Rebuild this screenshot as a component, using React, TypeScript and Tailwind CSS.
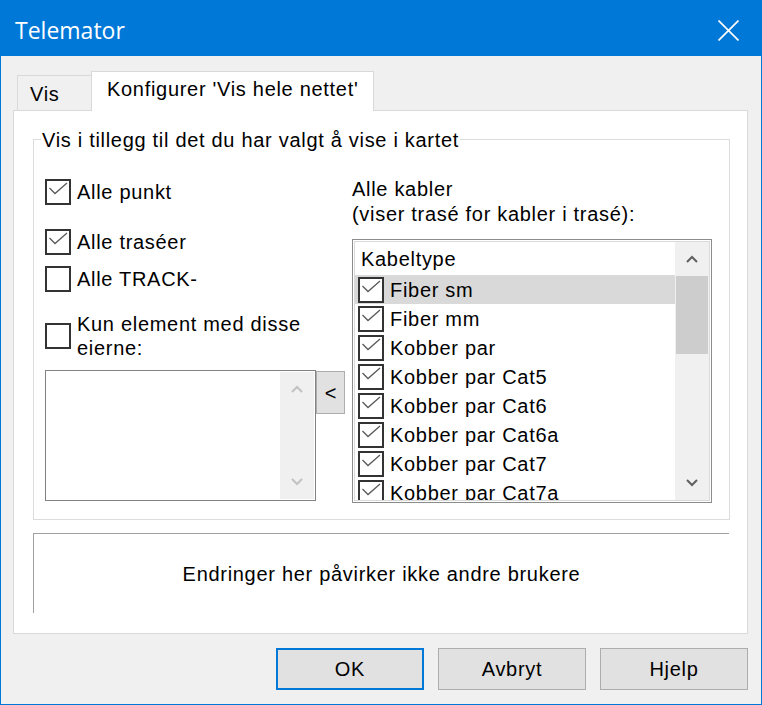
import React from "react";

function Box({ checked }: { checked: boolean }) {
  return (
    <div className="w-[26px] h-[26px] border-2 border-[#333333] bg-white shrink-0">
      {checked && (
        <svg viewBox="0 0 22 22" className="w-[22px] h-[22px] block">
          <polyline
            points="2.5,7 8,12.5 20,2"
            fill="none"
            stroke="#5a5a5a"
            strokeWidth="1.3"
          />
        </svg>
      )}
    </div>
  );
}

function Chevron({ up, color }: { up: boolean; color: string }) {
  return (
    <svg viewBox="0 0 12 8" className="w-[12px] h-[8px] block">
      <polyline
        points={up ? "1,7 6,2 11,7" : "1,1 6,6 11,1"}
        fill="none"
        stroke={color}
        strokeWidth="2"
      />
    </svg>
  );
}

const cables = [
  "Fiber sm",
  "Fiber mm",
  "Kobber par",
  "Kobber par Cat5",
  "Kobber par Cat6",
  "Kobber par Cat6a",
  "Kobber par Cat7",
  "Kobber par Cat7a",
];

export default function App() {
  return (
    <div className="w-[762px] h-[705px] bg-[#f0f0f0] flex flex-col border-x border-b border-[#0078d7] font-['Liberation_Sans',Arial,sans-serif] text-[20px] tracking-[0.7px] text-black overflow-hidden">
      {/* Title bar */}
      <div className="h-[56px] shrink-0 bg-[#0078d7] flex items-center justify-between pl-[14px] pr-[22px]">
        <span className="font-['Open_Sans',sans-serif] text-[23px] tracking-normal text-white leading-none pt-[4px]">
          Telemator
        </span>
        <svg viewBox="0 0 20 20" className="w-[21px] h-[21px] block mt-[4px]">
          <line x1="0.5" y1="0.5" x2="19.5" y2="19.5" stroke="white" strokeWidth="1.6" />
          <line x1="19.5" y1="0.5" x2="0.5" y2="19.5" stroke="white" strokeWidth="1.6" />
        </svg>
      </div>

      {/* Tabs */}
      <div className="mt-[15px] ml-[16px] h-[39px] flex items-end">
        <div className="w-[74px] h-[35px] border-l border-t border-[#d9d9d9] bg-[#f0f0f0] pl-[12px] pt-[6px] leading-[24px]">
          Vis
        </div>
        <div className="w-[283px] h-[40px] -mb-px relative z-10 border-l border-t border-r border-[#d9d9d9] bg-white pl-[15px] pt-[5px] leading-[24px]">
          Konfigurer 'Vis hele nettet'
        </div>
      </div>

      {/* Panel */}
      <div className="ml-[12px] w-[735px] h-[524px] border border-[#d9d9d9] bg-white flex flex-col">
        {/* Group box */}
        <div className="ml-[19px] mt-[28px] w-[697px] h-[381px] border border-[#dcdcdc] relative flex">
          <span className="absolute -top-[12px] left-[7px] bg-white px-[1px] leading-[24px]">
            Vis i tillegg til det du har valgt å vise i kartet
          </span>

          {/* Left column */}
          <div className="ml-[11px] mt-[39px] w-[307px] flex flex-col">
            <div className="h-[26px] flex items-center gap-[6px]">
              <Box checked />
              <span className="leading-[24px]">Alle punkt</span>
            </div>
            <div className="mt-[24px] h-[26px] flex items-center gap-[6px]">
              <Box checked />
              <span className="leading-[24px]">Alle traséer</span>
            </div>
            <div className="mt-[11px] h-[26px] flex items-center gap-[6px]">
              <Box checked={false} />
              <span className="leading-[24px]">Alle TRACK-</span>
            </div>
            <div className="mt-[20px] h-[48px] flex items-center gap-[6px]">
              <Box checked={false} />
              <span className="leading-[24px]">
                Kun element med disse
                <br />
                eierne:
              </span>
            </div>
            <div className="mt-[10px] flex items-start">
              <div className="w-[271px] h-[131px] border border-[#828282] p-[1px] bg-white flex justify-end">
                <div className="w-[34px] h-full bg-[#f0f0f0] flex flex-col justify-between">
                  <div className="h-[34px] flex items-center justify-center">
                    <Chevron up color="#c2c2c2" />
                  </div>
                  <div className="h-[34px] flex items-center justify-center">
                    <Chevron up={false} color="#c2c2c2" />
                  </div>
                </div>
              </div>
              <div className="mt-[1px] w-[29px] h-[43px] border border-[#adadad] bg-[#e1e1e1] flex items-center justify-center leading-none tracking-normal">
                &lt;
              </div>
            </div>
          </div>

          {/* Right column */}
          <div className="mt-[37px] w-[360px] flex flex-col">
            <div className="leading-[25px]">
              Alle kabler
              <br />
              (viser trasé for kabler i trasé):
            </div>
            <div className="mt-[12px] w-[360px] h-[264px] border border-[#8c8c8c] p-[1px] bg-white">
              <div className="h-full border border-[#dadada] flex overflow-hidden">
                <div className="flex-1 flex flex-col overflow-hidden">
                  <div className="h-[33px] shrink-0 flex items-center pl-[6px] leading-[24px]">
                    Kabeltype
                  </div>
                  {cables.map((c, i) => (
                    <div
                      key={c}
                      className={
                        "h-[29px] shrink-0 flex items-center pl-[3px] gap-[6px] " +
                        (i === 0 ? "bg-[#d9d9d9]" : "bg-white")
                      }
                    >
                      <Box checked />
                      <span className="leading-[24px] whitespace-nowrap">{c}</span>
                    </div>
                  ))}
                </div>
                <div className="w-[34px] shrink-0 bg-[#f0f0f0] flex flex-col">
                  <div className="h-[34px] shrink-0 flex items-center justify-center">
                    <Chevron up color="#606060" />
                  </div>
                  <div className="h-[78px] shrink-0 mx-[1px] bg-[#cdcdcd]" />
                  <div className="flex-1" />
                  <div className="h-[34px] shrink-0 flex items-center justify-center">
                    <Chevron up={false} color="#606060" />
                  </div>
                </div>
              </div>
            </div>
          </div>
        </div>

        {/* Info box */}
        <div className="ml-[19px] mt-[13px] w-[696px] h-[80px] border-t border-l border-[#a0a0a0] flex items-center justify-center leading-[24px]">
          Endringer her påvirker ikke andre brukere
        </div>
      </div>

      {/* Buttons */}
      <div className="mt-[14px] flex justify-end gap-[14px] pr-[13px]">
        <div className="w-[148px] h-[42px] border-2 border-[#0078d7] bg-[#e1e1e1] flex items-center justify-center leading-[24px]">
          OK
        </div>
        <div className="w-[148px] h-[42px] border border-[#adadad] bg-[#e1e1e1] flex items-center justify-center leading-[24px]">
          Avbryt
        </div>
        <div className="w-[148px] h-[42px] border border-[#adadad] bg-[#e1e1e1] flex items-center justify-center leading-[24px]">
          Hjelp
        </div>
      </div>
    </div>
  );
}
